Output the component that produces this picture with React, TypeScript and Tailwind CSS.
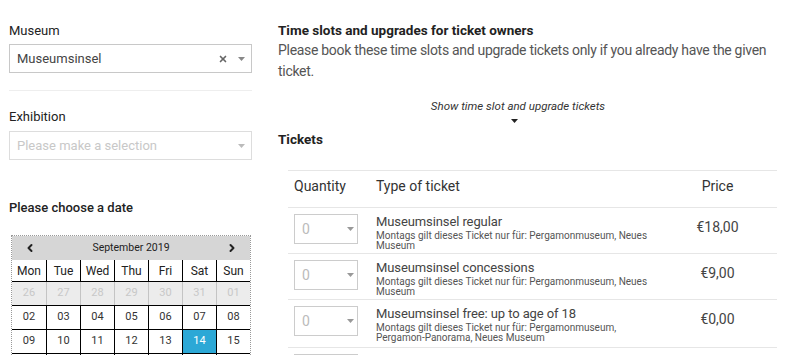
import { X, ChevronLeft, ChevronRight } from "lucide-react";

const font = { fontFamily: 'Roboto, "Liberation Sans", sans-serif' };

const tickets = [
  {
    name: "Museumsinsel regular",
    desc: "Montags gilt dieses Ticket nur für: Pergamonmuseum, Neues Museum",
    price: "€18,00",
  },
  {
    name: "Museumsinsel concessions",
    desc: "Montags gilt dieses Ticket nur für: Pergamonmuseum, Neues Museum",
    price: "€9,00",
  },
  {
    name: "Museumsinsel free: up to age of 18",
    desc: "Montags gilt dieses Ticket nur für: Pergamonmuseum, Pergamon-Panorama, Neues Museum",
    price: "€0,00",
  },
  {
    name: "Museumsinsel free: unemployed / refugees",
    desc: "Montags gilt dieses Ticket nur für: Pergamonmuseum, Neues Museum",
    price: "€0,00",
  },
];

const weeks = [
  ["26", "27", "28", "29", "30", "31", "01"],
  ["02", "03", "04", "05", "06", "07", "08"],
  ["09", "10", "11", "12", "13", "14", "15"],
  ["16", "17", "18", "19", "20", "21", "22"],
];

function Caret({ className = "" }: { className?: string }) {
  return (
    <svg width="7" height="4" viewBox="0 0 7 4" className={className}>
      <path d="M0 0h7L3.5 4z" fill="currentColor" />
    </svg>
  );
}

function Calendar() {
  const days = ["Mon", "Tue", "Wed", "Thu", "Fri", "Sat", "Sun"];
  return (
    <div className="mt-[17px] ml-[2px] w-[240px] border border-dotted border-[#999]">
      <div className="flex h-[24px] items-center justify-between bg-[#d6d6d6] px-[12px] text-[10.5px] text-[#222]">
        <ChevronLeft className="size-[12px]" strokeWidth={4} />
        <span>September 2019</span>
        <ChevronRight className="size-[12px]" strokeWidth={4} />
      </div>
      <div className="grid grid-cols-7 border-b border-black">
        {days.map((d, i) => (
          <div
            key={d}
            className={`flex h-[21px] items-center justify-center text-[12px] text-[#222] ${i > 0 ? "border-l border-black" : ""}`}
          >
            {d}
          </div>
        ))}
      </div>
      {weeks.map((w, r) => (
        <div
          key={r}
          className={`grid grid-cols-7 border-b border-black ${r === 0 ? "bg-[#ececec]" : "bg-white"}`}
        >
          {w.map((d, i) => {
            const sel = r === 2 && i === 5;
            return (
              <div
                key={d}
                className={`flex h-[23px] items-center justify-center text-[11px] ${
                  i > 0 ? (r === 0 ? "border-l border-[#c4c4c4]" : "border-l border-black") : ""
                } ${sel ? "bg-[#2ca8d6] text-white" : r === 0 ? "text-[#c8c8c8]" : "text-[#333]"}`}
              >
                {d}
              </div>
            );
          })}
        </div>
      ))}
    </div>
  );
}

export default function App() {
  return (
    <div className="flex h-[355px] w-[800px] overflow-hidden bg-white text-[#333]" style={font}>
      {/* Left column */}
      <div className="ml-[9px] w-[243px] shrink-0 pt-[21px]">
        <div className="text-[13px] leading-[20px] text-[#222]">Museum</div>
        <div className="mt-[3px] flex h-[29px] items-center border border-[#c8c8c8] pl-[7px] pr-[6px] text-[13px] text-[#444]">
          <span className="flex-1">Museumsinsel</span>
          <X className="size-[10px] text-[#666]" strokeWidth={4} />
          <Caret className="ml-[10px] text-[#888]" />
        </div>
        <div className="mt-[17px] border-t border-[#eee]" />
        <div className="mt-[16px] text-[13px] leading-[20px] text-[#222]">Exhibition</div>
        <div className="mt-[4px] flex h-[29px] items-center border border-[#ddd] pl-[7px] pr-[6px] text-[13px] text-[#c8c8c8]">
          <span className="flex-1">Please make a selection</span>
          <Caret className="text-[#bbb]" />
        </div>
        <div className="mt-[38px] text-[13px] font-medium leading-[20px] text-[#222]">
          Please choose a date
        </div>
        <Calendar />
      </div>

      {/* Right column */}
      <div className="ml-[26px] w-[500px] shrink-0 pt-[20px]">
        <div className="text-[13.5px] font-bold leading-[20px] text-[#222]">
          Time slots and upgrades for ticket owners
        </div>
        <p className="text-[14px] leading-[21px] tracking-[-0.3px] text-[#555]">
          Please book these time slots and upgrade tickets only if you already have the given
          ticket.
        </p>
        <div className="mt-[16px] flex flex-col items-center pr-[20px] text-[11.5px] italic leading-[16px] text-[#333]">
          <span>Show time slot and upgrade tickets</span>
          <Caret className="mt-[5px] -ml-[8px] text-[#222]" />
        </div>
        <div className="mt-[6px] text-[13.5px] font-bold leading-[20px] text-[#222]">Tickets</div>

        <div className="ml-[10px] mt-[21px] w-[489px] border-t border-[#e6e6e6]">
          <div className="flex h-[37px] items-center border-b border-[#e6e6e6] pb-[6px] text-[14px] text-[#333]">
            <div className="w-[88px] pl-[6px]">Quantity</div>
            <div className="flex-1">Type of ticket</div>
            <div className="w-[131px] pl-[12px] text-center">Price</div>
          </div>
          {tickets.map((t, k) => (
            <div
              key={t.name}
              className={`flex items-start border-b border-[#e6e6e6] pt-[6px] ${k === 2 ? "h-[48px]" : "h-[46px]"}`}
            >
              <div className="w-[88px] pl-[6px]">
                <div className="flex h-[30px] w-[64px] items-center justify-between border border-[#ccc] pl-[7px] pr-[3px] text-[14px] text-[#bbb]">
                  <span>0</span>
                  <Caret className="text-[#999]" />
                </div>
              </div>
              <div className="w-[274px]">
                <div className="text-[13px] leading-[16px] tracking-[-0.1px] text-[#444]">{t.name}</div>
                <div className="mt-[1px] text-[10px] leading-[9.5px] text-[#555]">{t.desc}</div>
              </div>
              <div className="w-[127px] pl-[8px] pt-[4px] text-center text-[14px] leading-[18px] text-[#444]">
                {t.price}
              </div>
            </div>
          ))}
        </div>
      </div>
    </div>
  );
}
